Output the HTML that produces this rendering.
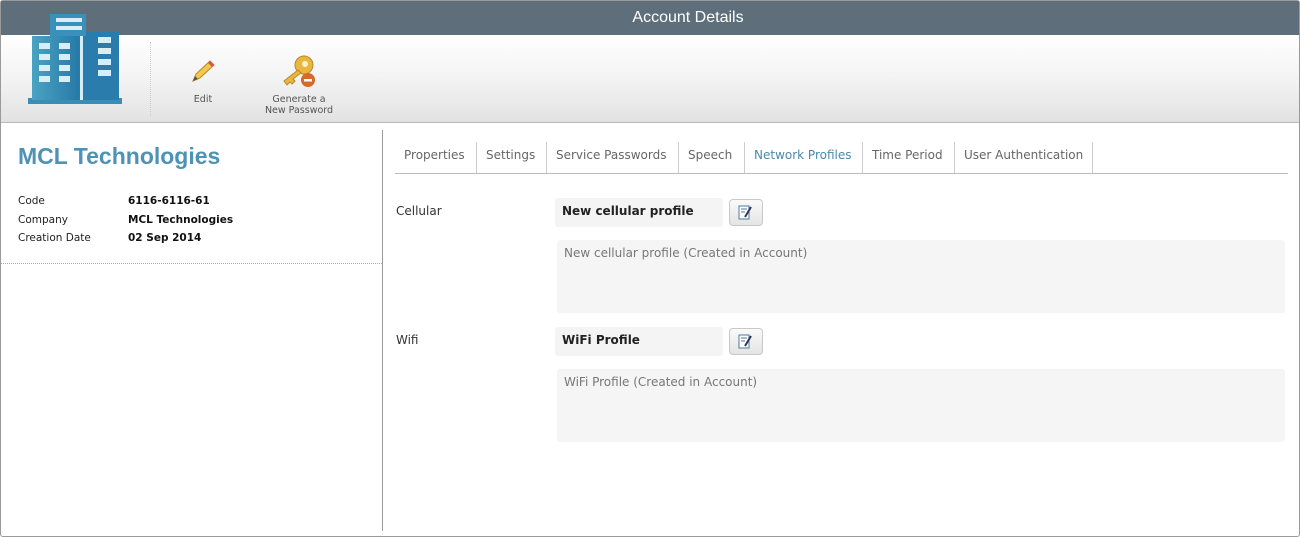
<!DOCTYPE html>
<html><head><style>
*{margin:0;padding:0;box-sizing:border-box}
body{width:1300px;height:537px;background:#fff;font-family:"DejaVu Sans","Liberation Sans",sans-serif;position:relative;overflow:hidden}
.frame{position:absolute;left:0;top:0;width:1300px;height:537px;border:1px solid #9a9a9a;border-radius:3px}
.hdr{position:absolute;left:1px;top:1px;width:1298px;height:34px;background:#5e6f7b;color:#fff;font-family:"Liberation Sans",sans-serif;font-size:16px;text-align:center;line-height:34px;padding-left:76px}
.tb{position:absolute;left:1px;top:35px;width:1298px;height:88px;background:linear-gradient(#fff,#f3f3f3 50%,#e2e2e2);border-bottom:1px solid #b8b8b8}
.sep{position:absolute;left:150px;top:42px;height:74px;border-left:1px dotted #ccc}
.tl{position:absolute;font-size:9.5px;color:#555;text-align:center;line-height:11px}
.abs{position:absolute}
.vl{position:absolute;left:382px;top:130px;height:401px;border-left:1px solid #999}
.title{position:absolute;left:18px;top:143px;font-family:"Liberation Sans",sans-serif;font-weight:bold;font-size:23px;color:#4e93b5}
.k{position:absolute;left:18px;font-size:10.5px;color:#222}
.v{position:absolute;left:128px;font-size:10.5px;font-weight:bold;color:#111}
.dot{position:absolute;left:1px;top:263px;width:381px;border-top:1px dotted #aaa}
.tabs{position:absolute;left:395px;top:142px;width:893px;height:32px;border-bottom:1px solid #bbb}
.tab{position:absolute;top:0;height:31px;line-height:27px;font-size:12px;color:#666;border-right:1px solid #ccc;padding:0 9px;white-space:nowrap;overflow:hidden}
.lbl{position:absolute;left:396px;font-size:12px;color:#333}
.nb{position:absolute;left:555px;width:168px;height:29px;background:#f4f4f4;border-radius:3px;font-size:12px;font-weight:bold;color:#222;line-height:27px;padding-left:7px}
.btn{position:absolute;left:729px;width:34px;height:27px;border:1px solid #c8c8c8;border-radius:4px;background:linear-gradient(#fafafa,#e4e4e4)}
.desc{position:absolute;left:557px;width:728px;height:73px;background:#f5f5f5;border-radius:3px;font-size:12px;color:#777;padding:6px 7px}
</style></head><body>
<div class="frame"></div>
<div class="hdr">Account Details</div>
<div class="tb"></div>
<svg class="abs" style="left:26px;top:12px" width="98" height="94" viewBox="0 0 98 94">
<defs><linearGradient id="g" x1="0" x2="1"><stop offset="0" stop-color="#4aa3c2"/><stop offset="1" stop-color="#2577a6"/></linearGradient></defs>
<rect x="2" y="86" width="94" height="6" fill="#3a8db5"/>
<rect x="6" y="24" width="50" height="64" fill="url(#g)"/>
<rect x="53" y="20" width="40" height="68" fill="#2a7cad"/>
<rect x="24" y="2" width="36" height="22" fill="#3a90ba"/>
<rect x="30" y="6" width="26" height="4" fill="#d8eef6"/><rect x="30" y="14" width="26" height="4" fill="#d8eef6"/>
<rect x="54" y="24" width="3" height="64" fill="#d8eef6"/>
<g fill="#d8eef6"><rect x="13" y="31" width="11" height="6"/><rect x="33" y="31" width="11" height="6"/><rect x="13" y="42" width="11" height="6"/><rect x="33" y="42" width="11" height="6"/><rect x="13" y="53" width="11" height="6"/><rect x="33" y="53" width="11" height="6"/><rect x="13" y="64" width="11" height="6"/><rect x="33" y="64" width="11" height="6"/>
<rect x="72" y="25" width="13" height="6"/><rect x="72" y="36" width="13" height="6"/><rect x="72" y="47" width="13" height="6"/><rect x="72" y="58" width="13" height="6"/></g>
</svg>
<div class="sep"></div>
<svg class="abs" style="left:190px;top:58px" width="26" height="26" viewBox="0 0 26 26"><path d="M3 23 L6 16 L20 3 L24 7 L10 20 Z" fill="#f2c94c" stroke="#b8862b"/><path d="M20 3 L24 7 L22 9 L18 5Z" fill="#d9534f"/><path d="M3 23 L5 18 L8 21Z" fill="#555"/></svg>
<div class="tl" style="left:183px;top:94px;width:40px">Edit</div>
<svg class="abs" style="left:280px;top:55px" width="38" height="34" viewBox="0 0 38 34"><circle cx="24" cy="10" r="9" fill="#e9b640" stroke="#b88a2a"/><circle cx="25" cy="9" r="3" fill="#fff3c4"/><path d="M18 15 L4 26 L7 30 L10 27 L12 29 L15 26 L13 24 L21 18Z" fill="#e9b640" stroke="#b88a2a"/><circle cx="28" cy="25" r="7" fill="#d9682b"/><rect x="24" y="24" width="8" height="2.5" fill="#fff"/></svg>
<div class="tl" style="left:258px;top:94px;width:82px">Generate a<br>New Password</div>
<div class="vl"></div>
<div class="title">MCL Technologies</div>
<div class="k" style="top:195px">Code</div><div class="v" style="top:195px">6116-6116-61</div>
<div class="k" style="top:214px">Company</div><div class="v" style="top:214px">MCL Technologies</div>
<div class="k" style="top:232px">Creation Date</div><div class="v" style="top:232px">02 Sep 2014</div>
<div class="dot"></div>
<div class="tabs">
<div class="tab" style="left:0;width:82px">Properties</div>
<div class="tab" style="left:82px;width:70px">Settings</div>
<div class="tab" style="left:152px;width:132px">Service Passwords</div>
<div class="tab" style="left:284px;width:66px">Speech</div>
<div class="tab" style="left:350px;width:118px;color:#4a8aa8">Network Profiles</div>
<div class="tab" style="left:468px;width:92px">Time Period</div>
<div class="tab" style="left:560px;width:138px">User Authentication</div>
</div>
<div class="lbl" style="top:204px">Cellular</div>
<div class="nb" style="top:198px">New cellular profile</div>
<div class="btn" style="top:199px"><svg width="32" height="25" viewBox="0 0 32 25"><rect x="9" y="6" width="10" height="13" fill="#fff" stroke="#4a7aa0"/><path d="M11 9h6M11 12h4" stroke="#4a7aa0"/><path d="M15 17 L21 7" stroke="#335" stroke-width="2"/></svg></div>
<div class="desc" style="top:240px">New cellular profile (Created in Account)</div>
<div class="lbl" style="top:333px">Wifi</div>
<div class="nb" style="top:327px">WiFi Profile</div>
<div class="btn" style="top:328px"><svg width="32" height="25" viewBox="0 0 32 25"><rect x="9" y="6" width="10" height="13" fill="#fff" stroke="#4a7aa0"/><path d="M11 9h6M11 12h4" stroke="#4a7aa0"/><path d="M15 17 L21 7" stroke="#335" stroke-width="2"/></svg></div>
<div class="desc" style="top:369px">WiFi Profile (Created in Account)</div>
</body></html>
